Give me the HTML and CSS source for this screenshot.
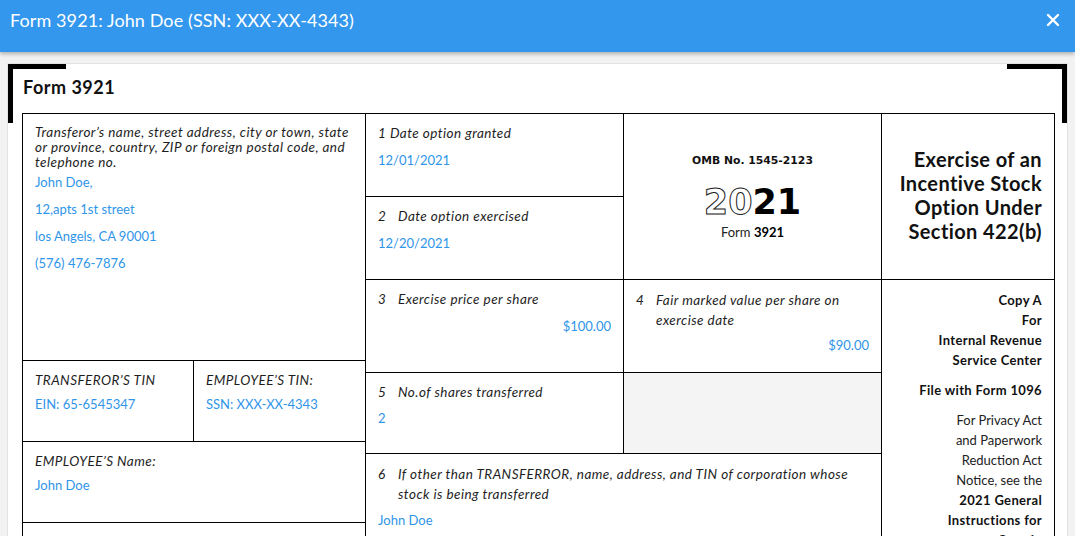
FILE: index.html
```html
<!DOCTYPE html>
<html>
<head>
<meta charset="utf-8">
<link rel="stylesheet" href="styles.css">
</head>
<body>
<header class="topbar">
  <div class="topbar-title">Form 3921: John Doe (SSN: XXX-XX-4343)</div>
  <svg class="close" width="14" height="14" viewBox="0 0 14 14"><path d="M2 2L12 12M12 2L2 12" stroke="#fff" stroke-width="2.4" stroke-linecap="round"/></svg>
</header>
<main class="card">
  <span class="corner corner-left"></span>
  <span class="corner corner-right"></span>
  <h1 class="form-title">Form 3921</h1>
  <div class="form">
    <div class="col col-1">
      <div class="cell c-transferor">
        <div class="lbl">Transferor’s name, street address, city or town, state or province, country, ZIP or foreign postal code, and telephone no.</div>
        <div class="addr">John Doe,</div>
        <div class="addr">12,apts 1st street</div>
        <div class="addr">los Angels, CA 90001</div>
        <div class="addr">(576) 476-7876</div>
      </div>
      <div class="tin-row">
        <div class="cell c-tin1">
          <div class="lbl">TRANSFEROR’S TIN</div>
          <div class="val v-tin">EIN: 65-6545347</div>
        </div>
        <div class="cell c-tin2">
          <div class="lbl">EMPLOYEE’S TIN:</div>
          <div class="val v-tin">SSN: XXX-XX-4343</div>
        </div>
      </div>
      <div class="cell c-name">
        <div class="lbl">EMPLOYEE’S Name:</div>
        <div class="val v-tin">John Doe</div>
      </div>
      <div class="cell c-rest"></div>
    </div>
    <div class="col col-mid">
      <div class="mid-row">
        <div class="col col-2">
          <div class="cell c-box12">
            <div class="lbl">1 Date option granted</div>
            <div class="val">12/01/2021</div>
          </div>
          <div class="cell c-box12">
            <div class="lbl num-lbl"><span class="n">2</span><span>Date option exercised</span></div>
            <div class="val">12/20/2021</div>
          </div>
        </div>
        <div class="cell c-omb">
          <div class="omb">OMB No. 1545-2123</div>
          <div class="year"><span class="outline">20</span><span class="solid">21</span></div>
          <div class="formno">Form <b>3921</b></div>
        </div>
      </div>
      <div class="mid-row">
        <div class="cell c-box3">
          <div class="lbl num-lbl"><span class="n">3</span><span>Exercise price per share</span></div>
          <div class="val right v-price">$100.00</div>
        </div>
        <div class="cell c-box3">
          <div class="lbl num-lbl wide"><span class="n">4</span><span>Fair marked value per share on exercise date</span></div>
          <div class="val right v-fmv">$90.00</div>
        </div>
      </div>
      <div class="mid-row">
        <div class="cell c-box5">
          <div class="lbl num-lbl"><span class="n">5</span><span>No.of shares transferred</span></div>
          <div class="val v-shares">2</div>
        </div>
        <div class="cell c-box5 shaded"></div>
      </div>
      <div class="cell c-box6">
        <div class="lbl num-lbl wide"><span class="n">6</span><span>If other than TRANSFERROR, name, address, and TIN of corporation whose stock is being transferred</span></div>
        <div class="val v-corp">John Doe</div>
      </div>
    </div>
    <div class="col col-4">
      <div class="cell c-title">
        <div class="doc-title">Exercise of an<br>Incentive Stock<br>Option Under<br>Section 422(b)</div>
      </div>
      <div class="cell c-copy">
        <div class="copy-group strong">Copy A<br>For<br>Internal Revenue<br>Service Center</div>
        <div class="copy-group strong">File with Form 1096</div>
        <div class="copy-group">For Privacy Act<br>and Paperwork<br>Reduction Act<br>Notice, see the<br><b>2021 General<br>Instructions for<br>Certain<br>Information<br>Returns.</b></div>
      </div>
    </div>
  </div>
</main>
</body>
</html>
```
FILE: styles.css
```css
html, body {
  margin: 0;
  padding: 0;
}
body {
  width: 1075px;
  height: 536px;
  overflow: hidden;
  background: #f2f2f2;
  font-family: Lato, "Open Sans", sans-serif;
  color: #1e1e1e;
}
.topbar {
  height: 52px;
  box-sizing: border-box;
  background: #3397ee;
  box-shadow: 0 2px 4px rgba(0, 0, 0, 0.28);
  display: flex;
  align-items: flex-start;
  justify-content: space-between;
  padding: 9px 15px 0 10px;
  position: relative;
  z-index: 2;
}
.topbar-title {
  color: #fff;
  font-size: 18px;
  line-height: 22px;
  letter-spacing: 0.1px;
}
.close {
  margin-top: 4px;
}
.card {
  position: relative;
  display: block;
  margin: 11px 0 0 7px;
  width: 1061px;
  box-sizing: border-box;
  background: #fff;
  border: 1px solid #e2e2e2;
  padding: 11px 12px 0 14px;
  height: 600px;
}
.corner {
  position: absolute;
  top: 0;
  width: 58px;
  height: 59px;
  box-sizing: border-box;
  border-top: 5px solid #000;
}
.corner-left {
  left: 0;
  border-left: 5px solid #000;
}
.corner-right {
  right: 0;
  width: 60px;
  border-right: 5px solid #000;
}
.form-title {
  margin: 0 0 14px 1px;
  font-size: 18px;
  line-height: 24px;
  font-weight: 700;
  letter-spacing: 0.5px;
  color: #111;
}
.form {
  display: flex;
  border-top: 1px solid #000;
  border-left: 1px solid #000;
  width: 1033px;
  box-sizing: border-box;
}
.col {
  display: flex;
  flex-direction: column;
}
.col-1 { width: 343px; }
.col-mid { width: 516px; }
.col-2 { width: 258px; }
.col-4 { width: 173px; }
.mid-row { display: flex; }
.mid-row > .cell { width: 258px; }
.cell {
  box-sizing: border-box;
  border-right: 1px solid #000;
  border-bottom: 1px solid #000;
  padding: 12px 12px 0 12px;
}
.lbl {
  font-style: italic;
  font-size: 13.5px;
  line-height: 15px;
  letter-spacing: 0.45px;
  color: #1e1e1e;
}
.num-lbl {
  display: flex;
}
.num-lbl .n {
  width: 20px;
  flex: none;
}
.num-lbl.wide { line-height: 20px; }
.val {
  color: #2f95e8;
  font-size: 13px;
  line-height: 15px;
  margin-top: 12px;
}
.right { text-align: right; }
.c-transferor { height: 247px; padding: 11px 6px 0 12px; }
.addr {
  color: #2f95e8;
  font-size: 13px;
  line-height: 27px;
}
.c-transferor .lbl + .addr { line-height: 15px; margin-top: 5px; margin-bottom: 6px; }
.tin-row { display: flex; }
.c-tin1 { width: 171px; height: 81px; }
.c-tin2 { width: 172px; height: 81px; }
.v-tin { margin-top: 9px; }
.c-name { height: 81px; }
.c-rest { height: 120px; }
.c-box12 { height: 83px; }
.c-omb {
  height: 166px;
  display: flex;
  flex-direction: column;
  align-items: center;
  justify-content: center;
  padding: 0;
}
.omb {
  font-family: "DejaVu Sans", sans-serif;
  font-weight: 700;
  font-size: 10.8px;
  line-height: 16px;
  color: #111;
}
.year {
  font-family: "DejaVu Sans", sans-serif;
  font-weight: 700;
  font-size: 35px;
  line-height: 40px;
  margin-top: 13px;
}
.outline {
  color: #fff;
  -webkit-text-stroke: 1px #222;
}
.solid { color: #000; }
.formno {
  font-size: 13px;
  line-height: 16px;
  margin-top: 2px;
  color: #222;
}
.formno b { font-weight: 700; color: #000; }
.c-box3 { height: 93px; }
.c-box3 .wide { margin-top: -2px; }
.v-price { margin-top: 12px; }
.v-fmv { margin-top: 8px; }
.c-box5 { height: 81px; }
.v-shares { margin-top: 11px; }
.shaded { background: #f4f4f4; }
.c-box6 { width: 516px; height: 120px; padding-top: 10px; }
.v-corp { margin-top: 9px; }
.c-title {
  height: 166px;
  display: flex;
  align-items: center;
  justify-content: flex-end;
  padding: 0 12px 0 0;
}
.doc-title {
  text-align: right;
  font-weight: 700;
  font-size: 20px;
  line-height: 24px;
  letter-spacing: 0.4px;
  color: #111;
  margin-top: -3px;
}
.c-copy {
  height: 400px;
  padding: 10px 12px 0 0;
  text-align: right;
  font-size: 13px;
  line-height: 20px;
  color: #222;
}
.copy-group + .copy-group { margin-top: 10px; }
.strong { font-weight: 700; color: #111; letter-spacing: 0.35px; }
.copy-group b { font-weight: 700; color: #111; letter-spacing: 0.35px; }
```
